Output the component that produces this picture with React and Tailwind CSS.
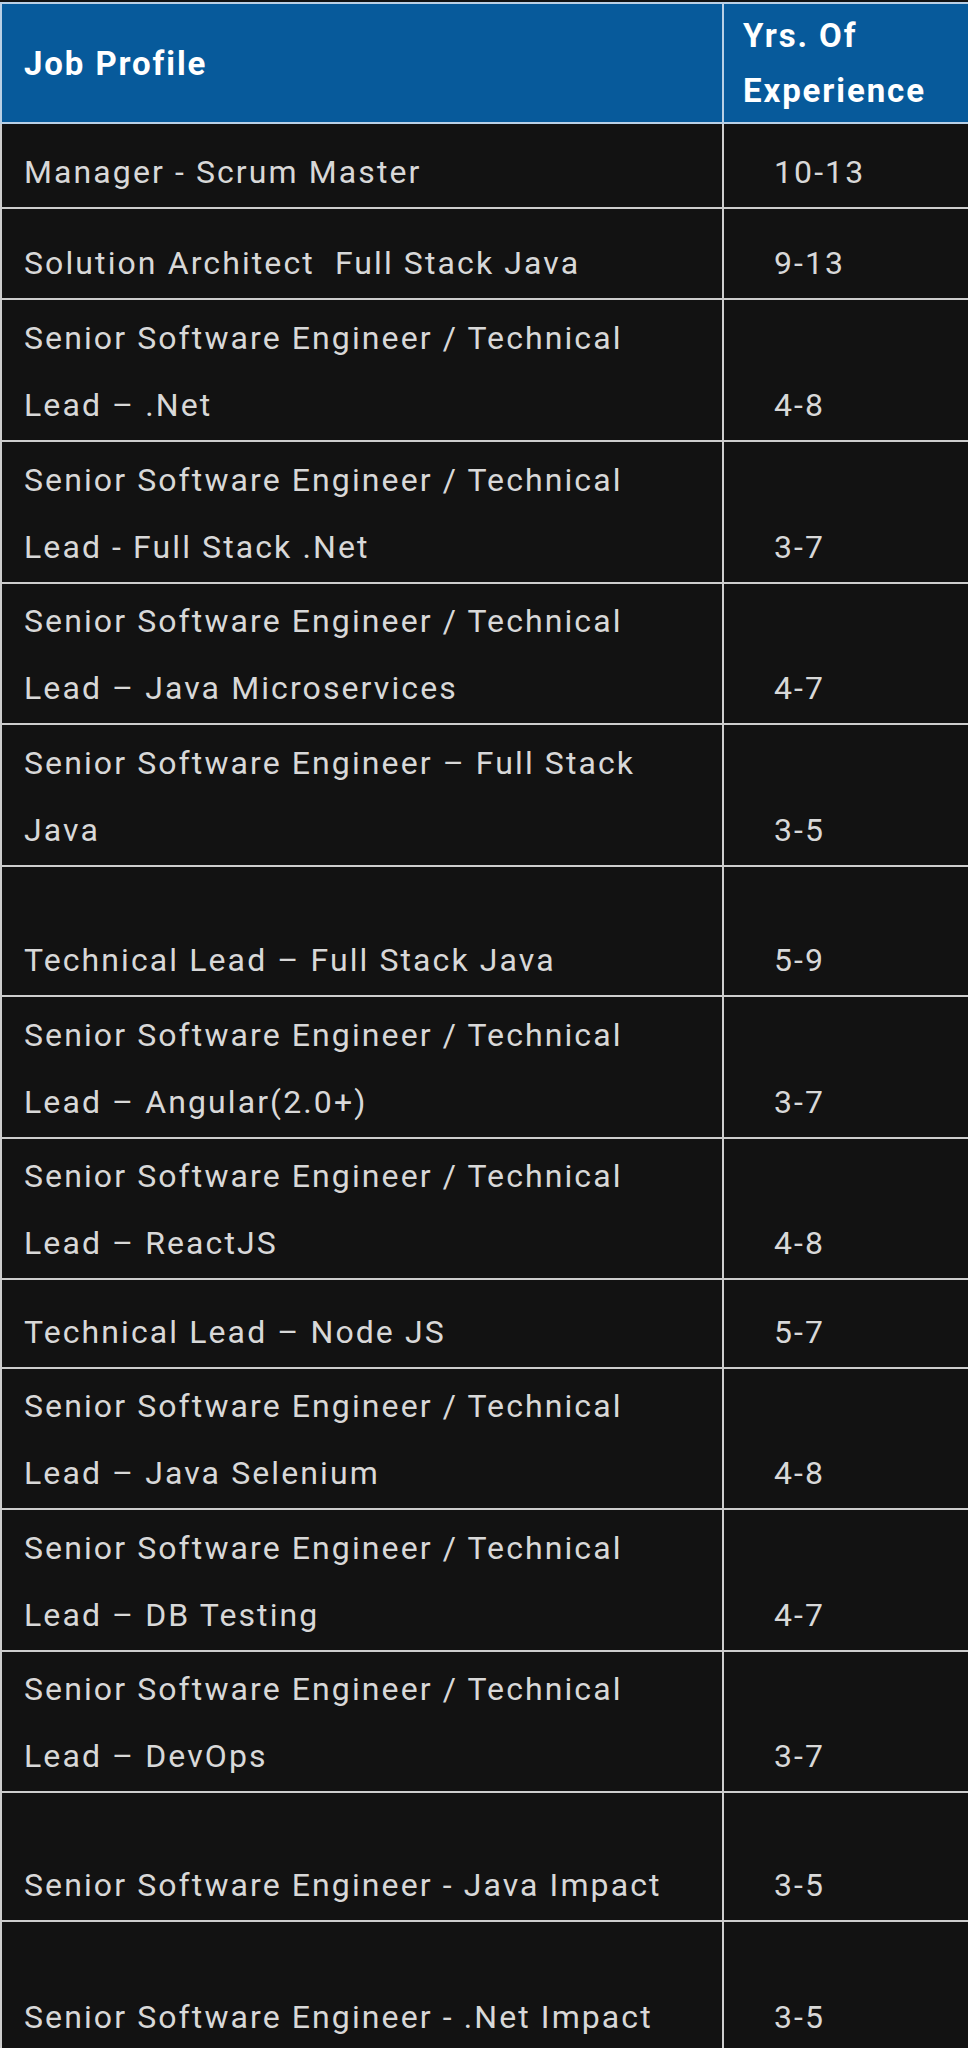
const rows = [
  { job: ["Manager - Scrum Master"], yrs: "10-13", h: "h-[85px]" },
  { job: ["Solution Architect\u00a0 Full Stack Java"], yrs: "9-13", h: "h-[91px]" },
  { job: ["Senior Software Engineer / Technical", "Lead – .Net"], yrs: "4-8", h: "h-[142px]" },
  { job: ["Senior Software Engineer / Technical", "Lead - Full Stack .Net"], yrs: "3-7", h: "h-[142px]" },
  { job: ["Senior Software Engineer / Technical", "Lead – Java Microservices"], yrs: "4-7", h: "h-[140px]" },
  { job: ["Senior Software Engineer – Full Stack", "Java"], yrs: "3-5", h: "h-[142px]" },
  { job: ["Technical Lead – Full Stack Java"], yrs: "5-9", h: "h-[130px]" },
  { job: ["Senior Software Engineer / Technical", "Lead – Angular(2.0+)"], yrs: "3-7", h: "h-[142px]" },
  { job: ["Senior Software Engineer / Technical", "Lead – ReactJS"], yrs: "4-8", h: "h-[141px]" },
  { job: ["Technical Lead – Node JS"], yrs: "5-7", h: "h-[89px]" },
  { job: ["Senior Software Engineer / Technical", "Lead – Java Selenium"], yrs: "4-8", h: "h-[141px]" },
  { job: ["Senior Software Engineer / Technical", "Lead – DB Testing"], yrs: "4-7", h: "h-[142px]" },
  { job: ["Senior Software Engineer / Technical", "Lead – DevOps"], yrs: "3-7", h: "h-[141px]" },
  { job: ["Senior Software Engineer - Java Impact"], yrs: "3-5", h: "h-[129px]" },
  { job: ["Senior Software Engineer - .Net Impact"], yrs: "3-5", h: "h-[132px]" },
];

export default function App() {
  return (
    <div className="min-h-screen bg-[#121212] pt-[2px] font-['Roboto',_'Liberation_Sans',_sans-serif]">
      <table className="w-[968px] table-fixed border-collapse">
        <colgroup>
          <col className="w-[722px]" />
          <col className="w-[246px]" />
        </colgroup>
        <thead>
          <tr className="h-[120px] bg-[#075a9b]">
            <th className="border-2 border-[#b9d0e6] pl-[22px] text-left align-middle text-[33px] font-bold leading-[55px] tracking-[1.9px] text-white">
              Job Profile
            </th>
            <th className="border-2 border-[#b9d0e6] pl-[19px] text-left align-middle text-[33px] font-bold leading-[55px] tracking-[1.9px] text-white">
              Yrs. Of
              <br />
              Experience
            </th>
          </tr>
        </thead>
        <tbody>
          {rows.map((r, i) => (
            <tr key={i} className={r.h}>
              <td className="border-2 border-[#cdcdcd] bg-[#121212] pl-[22px] pt-[4px] pb-[1px] align-bottom text-[32px] leading-[67px] tracking-[2.1px] text-[#d8d8d8]">
                {r.job.map((line, j) => (
                  <div key={j} className="whitespace-nowrap">{line}</div>
                ))}
              </td>
              <td className="border-2 border-[#cdcdcd] bg-[#121212] pl-[50px] pt-[4px] pb-[1px] align-bottom text-[32px] leading-[67px] tracking-[2.1px] text-[#d8d8d8]">
                {r.yrs}
              </td>
            </tr>
          ))}
        </tbody>
      </table>
    </div>
  );
}
